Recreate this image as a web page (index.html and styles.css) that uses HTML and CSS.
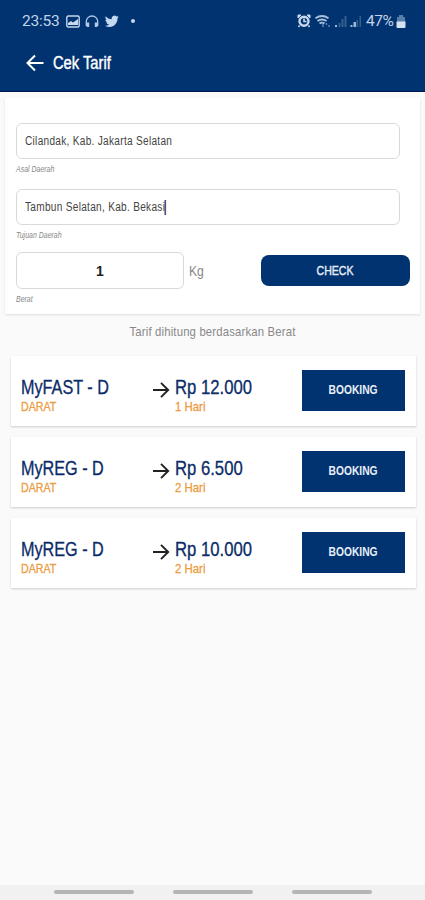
FILE: index.html
```html
<!DOCTYPE html>
<html lang="id">
<head>
<meta charset="utf-8">
<title>Cek Tarif</title>
<link rel="stylesheet" href="styles.css">
</head>
<body>
<header class="top">
  <div class="status">
    <span class="time">23:53</span>
    <svg class="s-pic" width="14" height="13" viewBox="0 0 14 13"><rect x=".8" y="1" width="12.4" height="11" rx="1.5" fill="none" stroke="#c8d8ed" stroke-width="1.4"/><path d="M2 10V8l3-2 2 1.5L12 4v6z" fill="#c8d8ed"/></svg>
    <svg class="s-head" width="14" height="13" viewBox="0 0 14 13"><path d="M1.3 11V6.500a5.700 5.500 0 0 1 11.400 0V11" fill="none" stroke="#b4c9e4" stroke-width="1.300"/><path d="M1 7.500h3.200V12H2.300L1 11zM13 7.500H9.800V12h1.900L13 11z" fill="#b4c9e4"/></svg>
    <svg class="s-bird" width="14" height="13" viewBox="0 0 24 22"><path d="M23.600 3.200c-.9.4-1.800.7-2.800.8 1-.6 1.800-1.600 2.100-2.700-.9.6-2 1-3.100 1.200A4.900 4.900 0 0 0 11.500 7C7.400 6.800 3.800 4.800 1.400 1.800c-1.300 2.200-.7 5.100 1.500 6.600-.8 0-1.600-.2-2.200-.6 0 2.300 1.600 4.400 3.900 4.900-.7.2-1.500.2-2.200.1.600 2 2.400 3.400 4.600 3.400A9.900 9.900 0 0 1 0 18.200c2.200 1.400 4.700 2.200 7.500 2.200 9.100 0 14.200-7.700 13.900-14.600.9-.7 1.700-1.600 2.200-2.600z" fill="#c3d9f0"/></svg>
    <i class="dot"></i>
    <svg class="s-right" width="64" height="14" viewBox="0 0 64 14">
      <path d="M1 1h3L1 4zM13 1h-3l3 3z" fill="#c8d8ed" stroke="#c8d8ed"/><circle cx="7" cy="7.200" r="4.500" fill="#003370" stroke="#c8d8ed" stroke-width="2.400"/><path d="M7 4.500v3h2.500M2.500 11.500l-1 1.500M11.500 11.500l1 1.500" fill="none" stroke="#c8d8ed" stroke-width="1.600"/>
      <path d="M18.500 4.200q6.500-4.500 13 0M20.500 7q4.500-3 9 0M22.500 9.500q2.500-1.800 5 0" fill="none" stroke="#a9c1dc" stroke-width="1.900"/><path d="M26 10v3M29.500 9v2m2.500 0v2" stroke="#5d82ad" stroke-width="1.500"/>
      <path d="M38 11h2v2h-2z" fill="#9db7d5"/><path d="M41.500 9h2v4h-2zM44.500 5h2v8h-2zM47.500 2h2v11h-2z" fill="#34608f"/>
      <path d="M53.500 11h2v2h-2zM56.500 8H59v5h-2.500z" fill="#9db7d5"/><path d="M59.500 6H61v7h-1.500zM62.500 2H64v11h-1.500z" fill="#34608f"/>
    </svg>
    <span class="pct">47%</span>
    <svg class="s-bat" width="10" height="13" viewBox="0 0 10 13"><path d="M3 0h4v2h2v5H1V2h2z" fill="#587eaa"/><path d="M.5 6.500h9V12q0 1-1 1h-7q-1 0-1-1z" fill="#d5e2f1"/></svg>
  </div>
  <div class="bar">
    <svg width="18" height="18" viewBox="0 0 18 18"><path d="M17.500 9H2M9 1.500L1.500 9 9 16.500" fill="none" stroke="#fff" stroke-width="2"/></svg>
    <h1>Cek Tarif</h1>
  </div>
</header>
<main>
  <section class="form">
    <div class="field"><span class="value">Cilandak, Kab. Jakarta Selatan</span></div>
    <div class="label">Asal Daerah</div>
    <div class="field"><span class="value">Tambun Selatan, Kab. Bekasi<i class="caret"></i></span></div>
    <div class="label l2">Tujuan Daerah</div>
    <div class="line">
      <div class="field qty">1</div>
      <span class="kg">Kg</span>
      <div class="check"><span>CHECK</span></div>
    </div>
    <div class="label l3">Berat</div>
  </section>
  <p class="note">Tarif dihitung berdasarkan Berat</p>
  <section class="list">
    <article class="card">
      <div class="svc"><b>MyFAST - D</b><small>DARAT</small></div>
      <svg class="arrow" width="18" height="18" viewBox="0 0 18 18"><path d="M1 9h15M9 1.800L16.200 9 9 16.200" fill="none" stroke="#222" stroke-width="1.900"/></svg>
      <div class="price"><b>Rp 12.000</b><small>1 Hari</small></div>
      <div class="book"><span>BOOKING</span></div>
    </article>
    <article class="card">
      <div class="svc"><b>MyREG - D</b><small>DARAT</small></div>
      <svg class="arrow" width="18" height="18" viewBox="0 0 18 18"><path d="M1 9h15M9 1.800L16.200 9 9 16.200" fill="none" stroke="#222" stroke-width="1.900"/></svg>
      <div class="price"><b>Rp 6.500</b><small>2 Hari</small></div>
      <div class="book"><span>BOOKING</span></div>
    </article>
    <article class="card">
      <div class="svc"><b>MyREG - D</b><small>DARAT</small></div>
      <svg class="arrow" width="18" height="18" viewBox="0 0 18 18"><path d="M1 9h15M9 1.800L16.200 9 9 16.200" fill="none" stroke="#222" stroke-width="1.900"/></svg>
      <div class="price"><b>Rp 10.000</b><small>2 Hari</small></div>
      <div class="book"><span>BOOKING</span></div>
    </article>
  </section>
</main>
<nav class="nav"><i></i><i></i><i></i></nav>
</body>
</html>
```
FILE: styles.css
```css
* { box-sizing: border-box; }
body {
  margin: 0;
  height: 900px;
  display: flex;
  flex-direction: column;
  overflow: hidden;
  background: #fafafa;
  font-family: "Liberation Sans", sans-serif;
}
svg { display: block; flex: none; }
.top { height: 92px; background: #003370; border-bottom: 1px solid #001653; flex: none; }
.status { height: 42px; padding: 0 19px 0 22px; display: flex; align-items: center; font: 15.500px/20px Roboto, sans-serif; color: #c3d4e9; }
.time { width: 44px; letter-spacing: -.25px; }
.s-head { margin-left: 5px; }
.s-bird { margin-left: 6px; }
.dot { width: 4px; height: 4px; border-radius: 50%; background: #c3d9f0; margin-left: 12px; }
.s-right { margin-left: auto; }
.pct { margin-left: 5px; width: 30px; white-space: nowrap; letter-spacing: -.4px; }
.bar { display: flex; align-items: center; padding-left: 26px; height: 42px; }
/* Condensed lettering */
h1, .value, .label, .kg, b, small { transform: scaleX(.84); transform-origin: 0 50%; }
.note, .check span, .book span { transform: scaleX(.84); }
h1 { margin: 0 0 0 9px; font-size: 17.500px; font-weight: 400; line-height: 22px; color: #fff; -webkit-text-stroke: .4px #fff; }
main { flex: 1; }
.form { height: 216px; margin: 6px 5px 0; padding: 25px 20px 0 11px; background: #fff; box-shadow: 0 1px 2px #ddd; }
.field { height: 36px; border: 1px solid #d9d9d9; border-radius: 6px; padding-left: 7.500px; display: flex; align-items: center; font-size: 12px; color: #444; white-space: nowrap; }
.value { display: flex; align-items: center; letter-spacing: .35px; }
.caret { width: 2.400px; height: 15px; margin-left: -1px; background: #505078; }
.label { height: 30px; padding-top: 5px; font-size: 8.300px; line-height: 10px; font-style: italic; color: #888; }
.l2 { height: 27px; }
.l3 { padding-top: 5px; }
.line { display: flex; align-items: center; margin-right: -10px; }
.qty { width: 168px; padding: 0; justify-content: center; font-size: 14px; font-weight: 700; color: #222; height: 37px; }
.kg { margin-left: 5px; font-size: 14.500px; color: #888; }
.check { margin-left: auto; width: 149px; height: 31px; border-radius: 8px; background: #003370; color: #e8eef8; display: flex; align-items: center; justify-content: center; font-size: 12.600px; -webkit-text-stroke: .4px #e8eef8; }
.note { margin: 9px 0 0; text-align: center; font-size: 13.500px; line-height: 18px; color: #888; letter-spacing: .2px; }
.list { margin: 15px 9px 0 11px; display: flex; flex-direction: column; gap: 11px; }
.card { height: 70px; background: #fff; box-shadow: 0 1px 2px #ccc; display: grid; grid-template-columns: 131px 23px 127px 103px; padding: 14px 0 0 10px; align-items: start; }
b, small { display: block; font-weight: 400; white-space: nowrap; }
b { font-size: 19.300px; line-height: 22px; margin-top: 7px; color: #0b2c69; -webkit-text-stroke: .3px #0b2c69; }
small { font-size: 12.700px; line-height: 15px; margin-top: 1px; color: #eb9c3f; -webkit-text-stroke: .3px #eb9c3f; }
.price b { transform: scaleX(.865); }
.price small { transform: scaleX(.9); }
.arrow { margin-top: 11px; }
.book { height: 41px; padding-bottom: 1px; background: #003370; color: #e8eef8; display: flex; align-items: center; justify-content: center; font-size: 12.600px; font-weight: 700; }
.book span { transform: scaleX(.815); }
.nav { height: 15px; background: #f1f1f1; padding: 5px 53px 0 54px; display: flex; justify-content: space-between; }
.nav i { width: 80px; height: 4px; border-radius: 2px; background: #b5b5b5; }
```
